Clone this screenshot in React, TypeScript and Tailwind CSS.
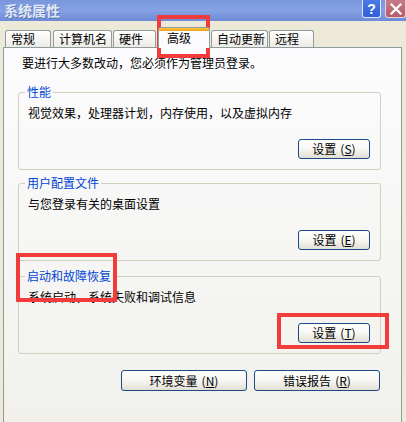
import React from 'react';

const tabs = [
  { label: '常规', cls: 'ml-[5px] w-[46px]' },
  { label: '计算机名', cls: 'ml-[2px] w-[59px]' },
  { label: '硬件', cls: 'ml-[1px] w-[43px]' },
  { label: '高级', cls: 'ml-[2px] w-[52px]', active: true },
  { label: '自动更新', cls: 'ml-[1px] w-[57px]' },
  { label: '远程', cls: 'ml-[1px] w-[45px]' },
];

function XpButton({ text, accel, className }: { text: string; accel: string; className: string }) {
  return (
    <button
      className={`h-[20px] flex items-center justify-center rounded-[3px] border border-[#1b4a85] bg-linear-to-b from-white via-[#f7f6f2] to-[#e2dfd5] text-[12px] leading-none text-black ${className}`}
    >
      {text}
      <span className="ml-[4px]">
        (<span className="underline underline-offset-1">{accel}</span>)
      </span>
    </button>
  );
}

function Group({
  title,
  desc,
  accel,
  className,
}: {
  title: string;
  desc: string;
  accel: string;
  className: string;
}) {
  return (
    <fieldset className={`ml-[14px] w-[363px] rounded-[3px] border border-[#d0d0bf] ${className}`}>
      <legend className="ml-[6px] px-[2px] leading-[14px] text-[#0046d5]">{title}</legend>
      <div className="flex flex-col pl-[9px] pr-[10px] pt-[7px] pb-[10px]">
        <p className="leading-[14px] text-black">{desc}</p>
        <XpButton text="设置" accel={accel} className="mt-[19px] w-[72px] self-end" />
      </div>
    </fieldset>
  );
}

export default function App() {
  return (
    <div className="relative w-[406px] h-[422px] overflow-hidden bg-[#ece9d8] text-[12px] font-['Noto_Sans_CJK_SC','Liberation_Sans',sans-serif]">
      {/* title bar */}
      <div className="h-[21px] flex items-start justify-between bg-linear-to-b from-[#7996dc] via-[#86a2e4] to-[#6d8bd6]">
        <span className="ml-[4px] mt-[2px] text-[14px] font-bold leading-[16px] text-[#e3e9f7] [text-shadow:1px_1px_0_#5a74b8]">
          系统属性
        </span>
        <div className="flex gap-[4px]">
          <div className="w-[19px] h-[18px] flex items-center justify-center rounded-b-[3px] border border-t-0 border-[#dce6fa] bg-linear-to-b from-[#4a7ae6] to-[#2f5fd6] font-['Liberation_Sans',sans-serif] text-[14px] font-bold leading-[14px] text-white">
            ?
          </div>
          <div className="w-[21px] h-[18px] flex items-center justify-center rounded-b-[3px] border border-t-0 border-[#ead6da] bg-linear-to-b from-[#c97a86] to-[#b55d6c] text-white">
            <svg width="12" height="12" viewBox="0 0 12 12">
              <path d="M1.5 1.5 L10.5 10.5 M10.5 1.5 L1.5 10.5" stroke="white" strokeWidth="2.2" strokeLinecap="square" />
            </svg>
          </div>
        </div>
      </div>

      {/* tabs */}
      <div className="h-[26px] flex items-end">
        {tabs.map((t) =>
          t.active ? (
            <div
              key={t.label}
              className={`relative z-10 -mb-px h-[21px] flex items-start overflow-hidden rounded-t-[3px] border border-b-0 border-[#919b9c] bg-[#fcfcfe] ${t.cls}`}
            >
              <div className="absolute left-0 right-0 top-0 h-[3px] bg-linear-to-b from-[#ffc73c] to-[#e5a01a]" />
              <span className="pl-[8px] pt-[3px] leading-[14px] text-black">{t.label}</span>
            </div>
          ) : (
            <div
              key={t.label}
              className={`h-[17px] flex items-center rounded-t-[3px] border border-b-0 border-[#919b9c] bg-linear-to-b from-white to-[#ecebe5] ${t.cls}`}
            >
              <span className="pl-[5px] leading-[14px] text-black">{t.label}</span>
            </div>
          )
        )}
      </div>

      {/* tab page */}
      <div className="ml-[3px] w-[399px] h-[390px] border border-[#919b9c] bg-linear-to-b from-[#fcfcfe] to-[#f1f0eb] pt-[8px]">
        <p className="pl-[18px] leading-[14px] text-black">要进行大多数改动，您必须作为管理员登录。</p>

        <Group className="mt-[15px]" title="性能" desc="视觉效果，处理器计划，内存使用，以及虚拟内存" accel="S" />
        <Group className="mt-[6px]" title="用户配置文件" desc="与您登录有关的桌面设置" accel="E" />
        <Group className="mt-[8px]" title="启动和故障恢复" desc="系统启动，系统失败和调试信息" accel="T" />

        <div className="ml-[14px] w-[362px] mt-[16px] flex justify-end gap-[7px]">
          <XpButton text="环境变量" accel="N" className="w-[126px] h-[21px]" />
          <XpButton text="错误报告" accel="R" className="w-[126px] h-[21px]" />
        </div>
      </div>

      {/* red annotation boxes */}
      <div className="absolute left-[157px] top-[15px] w-[53px] h-[43px] border-4 border-[#f23b3b]" />
      <div className="absolute left-[16px] top-[253px] w-[101px] h-[49px] border-4 border-[#f23b3b]" />
      <div className="absolute left-[277px] top-[313px] w-[112px] h-[36px] border-4 border-[#f23b3b]" />
    </div>
  );
}
